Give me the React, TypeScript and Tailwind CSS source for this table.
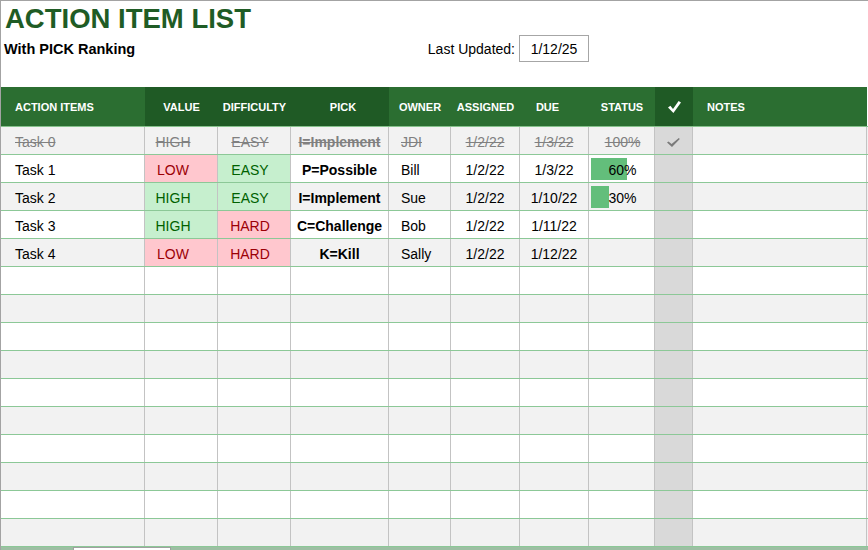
import React from "react";

type Row = {
  task: string;
  value: string;
  diff: string;
  pick: string;
  owner: string;
  assigned: string;
  due: string;
  status?: number;
  done?: boolean;
};

const rows: Row[] = [
  { task: "Task 0", value: "HIGH", diff: "EASY", pick: "I=Implement", owner: "JDI", assigned: "1/2/22", due: "1/3/22", status: 100, done: true },
  { task: "Task 1", value: "LOW", diff: "EASY", pick: "P=Possible", owner: "Bill", assigned: "1/2/22", due: "1/3/22", status: 60 },
  { task: "Task 2", value: "HIGH", diff: "EASY", pick: "I=Implement", owner: "Sue", assigned: "1/2/22", due: "1/10/22", status: 30 },
  { task: "Task 3", value: "HIGH", diff: "HARD", pick: "C=Challenge", owner: "Bob", assigned: "1/2/22", due: "1/11/22" },
  { task: "Task 4", value: "LOW", diff: "HARD", pick: "K=Kill", owner: "Sally", assigned: "1/2/22", due: "1/12/22" },
];

const GRID =
  "grid grid-cols-[144px_73px_73px_98px_62px_69px_69px_66px_38px_174px]";

const good = "bg-[#c6efce] text-[#006100]";
const bad = "bg-[#ffc7ce] text-[#9c0006]";

function HeaderCheck() {
  return (
    <svg width="13" height="12" viewBox="0 0 13 12">
      <polygon points="0,6.6 2.4,4.8 5,8 10.6,0 13,1.4 5.4,12" fill="#ffffff" />
    </svg>
  );
}

function GrayCheck() {
  return (
    <svg width="13" height="9" viewBox="0 0 13 9">
      <polygon points="0,4.6 1.5,3.5 4.6,6 11.8,0 12.8,0.9 5,9" fill="#7a7a7a" />
    </svg>
  );
}

export default function App() {
  const empty = Array.from({ length: 10 });
  const cellBase =
    "h-[27px] flex items-center pt-[3px] border-r border-[#c3c3c3] text-[14px] leading-[16px]";
  return (
    <div className="w-[868px] h-[550px] bg-white overflow-hidden font-['Liberation_Sans',Arial,sans-serif] text-black">
      <div className="w-[868px] border-l border-t border-[#a3a3a3]">
        {/* Top area */}
        <div className="h-[86px] flex flex-col">
          <div className="pl-[4px] pt-[4px] text-[27.5px] leading-[28px] font-bold text-[#1f5c25]">
            ACTION ITEM LIST
          </div>
          <div className={`${GRID} mt-[2px] h-[27px]`}>
            <div className="col-span-6 flex items-center justify-between">
              <div className="pl-[3px] pt-[1px] text-[14.5px] leading-[17px] font-bold">With PICK Ranking</div>
              <div className="pr-[5px] pt-[1px] text-[14px] leading-[16px]">Last Updated:</div>
            </div>
            <div className="-ml-[1px] w-[70px] h-[27px] border border-[#a6a6a6] flex items-center justify-center pt-[1px] text-[14px] leading-[16px]">
              1/12/25
            </div>
          </div>
        </div>

        {/* Header */}
        <div className={`${GRID} h-[40px] border-b border-[#86c28c] text-white text-[11px] font-bold`}>
          <div className="bg-[#2b6e31] flex items-center pl-[14px] pt-[1px]">ACTION ITEMS</div>
          <div className="bg-[#1f5a25] flex items-center justify-center pt-[1px]">VALUE</div>
          <div className="bg-[#1f5a25] flex items-center justify-center pt-[1px]">DIFFICULTY</div>
          <div className="bg-[#1f5a25] flex items-center justify-center pl-[6px] pt-[1px]">PICK</div>
          <div className="bg-[#2b6e31] flex items-center justify-center pt-[1px]">OWNER</div>
          <div className="bg-[#2b6e31] flex items-center justify-center pt-[1px]">ASSIGNED</div>
          <div className="bg-[#2b6e31] flex items-center justify-center pr-[14px] pt-[1px]">DUE</div>
          <div className="bg-[#2b6e31] flex items-center justify-center pt-[1px]">STATUS</div>
          <div className="bg-[#1f5a25] flex items-center justify-center">
            <HeaderCheck />
          </div>
          <div className="bg-[#2b6e31] flex items-center pl-[14px] pt-[1px]">NOTES</div>
        </div>

        {/* Body */}
        {rows.map((r, i) => {
          const rowBg = i % 2 === 0 ? "bg-[#f2f2f2]" : "bg-white";
          const done = !!r.done;
          const strike = done ? "line-through text-[#808080]" : "";
          const valCls = done ? "" : r.value === "HIGH" ? good : bad;
          const diffCls = done ? "" : r.diff === "EASY" ? good : bad;
          return (
            <div key={r.task} className={`${GRID} ${rowBg} border-b border-[#8cc897]`}>
              <div className={`${cellBase} pl-[14px] ${strike}`}>{r.task}</div>
              <div className={`${cellBase} justify-center pr-[16px] text-[13px] ${valCls} ${strike}`}>{r.value}</div>
              <div className={`${cellBase} justify-center pr-[8px] text-[13px] ${diffCls} ${strike}`}>{r.diff}</div>
              <div className={`${cellBase} justify-center font-bold text-[13px] ${strike}`}>{r.pick}</div>
              <div className={`${cellBase} pl-[12px] ${strike}`}>{r.owner}</div>
              <div className={`${cellBase} justify-center ${strike}`}>{r.assigned}</div>
              <div className={`${cellBase} justify-center ${strike}`}>{r.due}</div>
              <div className={`${cellBase} relative justify-center pl-[2px] ${strike}`}>
                {r.status !== undefined && !done && (
                  <div
                    className="absolute left-[2px] top-[3px] h-[22px] bg-[#63be7b]"
                    style={{ width: `${Math.round(r.status * 0.6)}px` }}
                  />
                )}
                {r.status !== undefined && <span className="relative">{r.status}%</span>}
              </div>
              <div className={`${cellBase} justify-center bg-[#d9d9d9] border-[#b5b5b5]`}>
                {done && <GrayCheck />}
              </div>
              <div className={`${cellBase} border-[#5f5f5f]`}></div>
            </div>
          );
        })}
        {empty.map((_, j) => {
          const i = j + rows.length;
          const rowBg = i % 2 === 0 ? "bg-[#f2f2f2]" : "bg-white";
          return (
            <div key={i} className={`${GRID} ${rowBg} border-b border-[#8cc897]`}>
              <div className={cellBase}></div>
              <div className={cellBase}></div>
              <div className={cellBase}></div>
              <div className={cellBase}></div>
              <div className={cellBase}></div>
              <div className={cellBase}></div>
              <div className={cellBase}></div>
              <div className={cellBase}></div>
              <div className={`${cellBase} bg-[#d9d9d9] border-[#b5b5b5]`}></div>
              <div className={`${cellBase} border-[#5f5f5f]`}></div>
            </div>
          );
        })}
        <div className="h-[4px] bg-[#9dbfa3] flex">
          <div className="ml-[72px] w-[98px] h-full bg-white border-x border-t border-[#a0a0a0]"></div>
        </div>
      </div>
    </div>
  );
}
